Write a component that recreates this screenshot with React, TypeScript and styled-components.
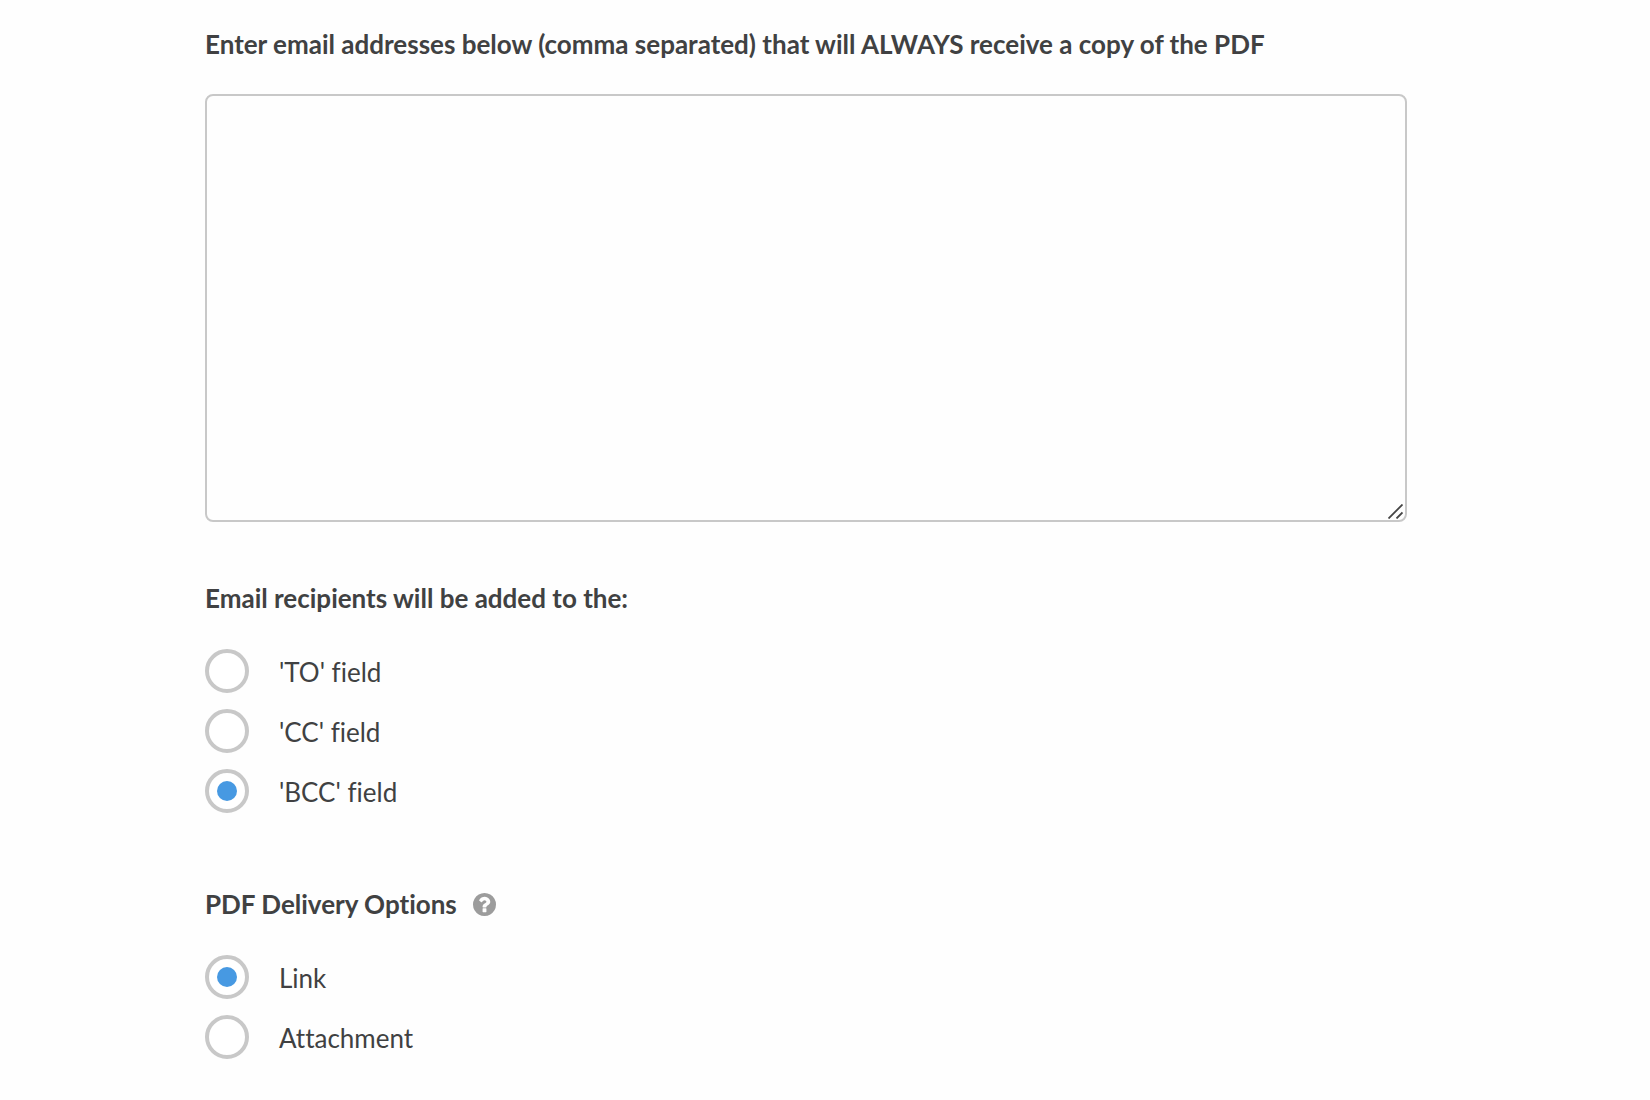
import React, { useState } from "react";
import styled, { createGlobalStyle } from "styled-components";

const GlobalStyle = createGlobalStyle`
  *, *::before, *::after { box-sizing: border-box; }
  body {
    margin: 0;
    background: #fefefe;
    color: #404142;
    font-family: Lato, "Open Sans", "Liberation Sans", sans-serif;
    font-size: 26px;
    line-height: 32px;
    font-variant-ligatures: none;
  }
`;

const Form = styled.form`
  display: grid;
  padding: 28px 243px 32px 205px;
`;

const HeadingLabel = styled.label`
  display: block;
  margin-bottom: 34px;
  font-weight: 700;
`;

const TextAreaFrame = styled.div`
  position: relative;
  display: flex;
  margin-bottom: 60px;
`;

const EmailBox = styled.textarea`
  flex: 1;
  min-width: 0;
  height: 428px;
  padding: 16px;
  border: 2px solid #c8c8c8;
  border-radius: 8px;
  background: #fefefe;
  color: inherit;
  font: inherit;
  resize: none;
`;

const Grip = styled.svg`
  position: absolute;
  right: 4px;
  bottom: 3px;
  width: 15px;
  height: 15px;
  pointer-events: none;
`;

const Group = styled.fieldset`
  min-width: 0;
  margin: 0;
  padding: 0;
  border: 0;

  & + & {
    margin-top: 75px;
  }
`;

const Legend = styled.legend`
  display: flex;
  align-items: center;
  gap: 16px;
  padding: 0;
  margin-bottom: 35px;
  font-weight: 700;
`;

const HelpButton = styled.button`
  display: flex;
  padding: 0;
  border: 0;
  background: none;
  color: #9c9c9c;
  cursor: pointer;
`;

const Options = styled.div`
  display: grid;
  gap: 16px;
`;

const Option = styled.label`
  display: flex;
  align-items: center;
  gap: 30px;
  width: fit-content;
  height: 44px;
  cursor: pointer;
`;

const OptionText = styled.span`
  padding-top: 2px;
`;

const Radio = styled.input`
  appearance: none;
  display: grid;
  place-items: center;
  flex: none;
  width: 44px;
  height: 44px;
  margin: 0;
  border: 4px solid #c8c8c8;
  border-radius: 50%;
  background: #fff;
  cursor: pointer;

  &:checked::before {
    content: "";
    width: 20px;
    height: 20px;
    border-radius: 50%;
    background: #4799e2;
  }
`;

type RadioListProps = {
  name: string;
  options: string[];
  value: string;
  onChange: (value: string) => void;
};

function RadioList({ name, options, value, onChange }: RadioListProps) {
  return (
    <Options>
      {options.map((option) => (
        <Option key={option}>
          <Radio
            type="radio"
            name={name}
            value={option}
            checked={value === option}
            onChange={() => onChange(option)}
          />
          <OptionText>{option}</OptionText>
        </Option>
      ))}
    </Options>
  );
}

export default function App() {
  const [field, setField] = useState("'BCC' field");
  const [delivery, setDelivery] = useState("Link");

  return (
    <>
      <GlobalStyle />
      <Form>
        <HeadingLabel htmlFor="emails">
          Enter email addresses below (comma separated) that will ALWAYS receive a copy of the PDF
        </HeadingLabel>
        <TextAreaFrame>
          <EmailBox id="emails" />
          <Grip viewBox="0 0 15 15" fill="none" stroke="#444" strokeWidth="1.8" aria-hidden="true">
            <path d="M.5 14.500 14.500 .5M8.500 14.500l6-6" />
          </Grip>
        </TextAreaFrame>
        <Group>
          <Legend>Email recipients will be added to the:</Legend>
          <RadioList
            name="field"
            options={["'TO' field", "'CC' field", "'BCC' field"]}
            value={field}
            onChange={setField}
          />
        </Group>
        <Group>
          <Legend>
            PDF Delivery Options
            <HelpButton type="button" aria-label="Help">
              <svg width="23" height="23" viewBox="128 128 1536 1536" fill="currentColor" aria-hidden="true">
                <path d="M1024 1376v-192q0-14-9-23t-23-9h-192q-14 0-23 9t-9 23v192q0 14 9 23t23 9h192q14 0 23-9t9-23zM1280 704q0-88-55.5-163t-138.5-116-170-41q-243 0-371 213-15 24 8 42l132 100q7 6 19 6 16 0 25-12 53-68 86-92 34-24 86-24 48 0 85.5 26t37.5 59q0 38-20 61t-68 45q-63 28-115.5 86.5t-52.5 125.5v36q0 14 9 23t23 9h192q14 0 23-9t9-23q0-19 21.5-49.5t54.5-49.5q32-18 49-28.5t46-35 44.5-48 28-60.5 12.5-81zM1664 896q0 209-103 385.5t-279.5 279.5-385.5 103-385.500-103-279.500-279.500-103-385.500 103-385.500 279.500-279.500 385.500-103 385.500 103 279.500 279.500 103 385.500z" />
              </svg>
            </HelpButton>
          </Legend>
          <RadioList
            name="delivery"
            options={["Link", "Attachment"]}
            value={delivery}
            onChange={setDelivery}
          />
        </Group>
      </Form>
    </>
  );
}
